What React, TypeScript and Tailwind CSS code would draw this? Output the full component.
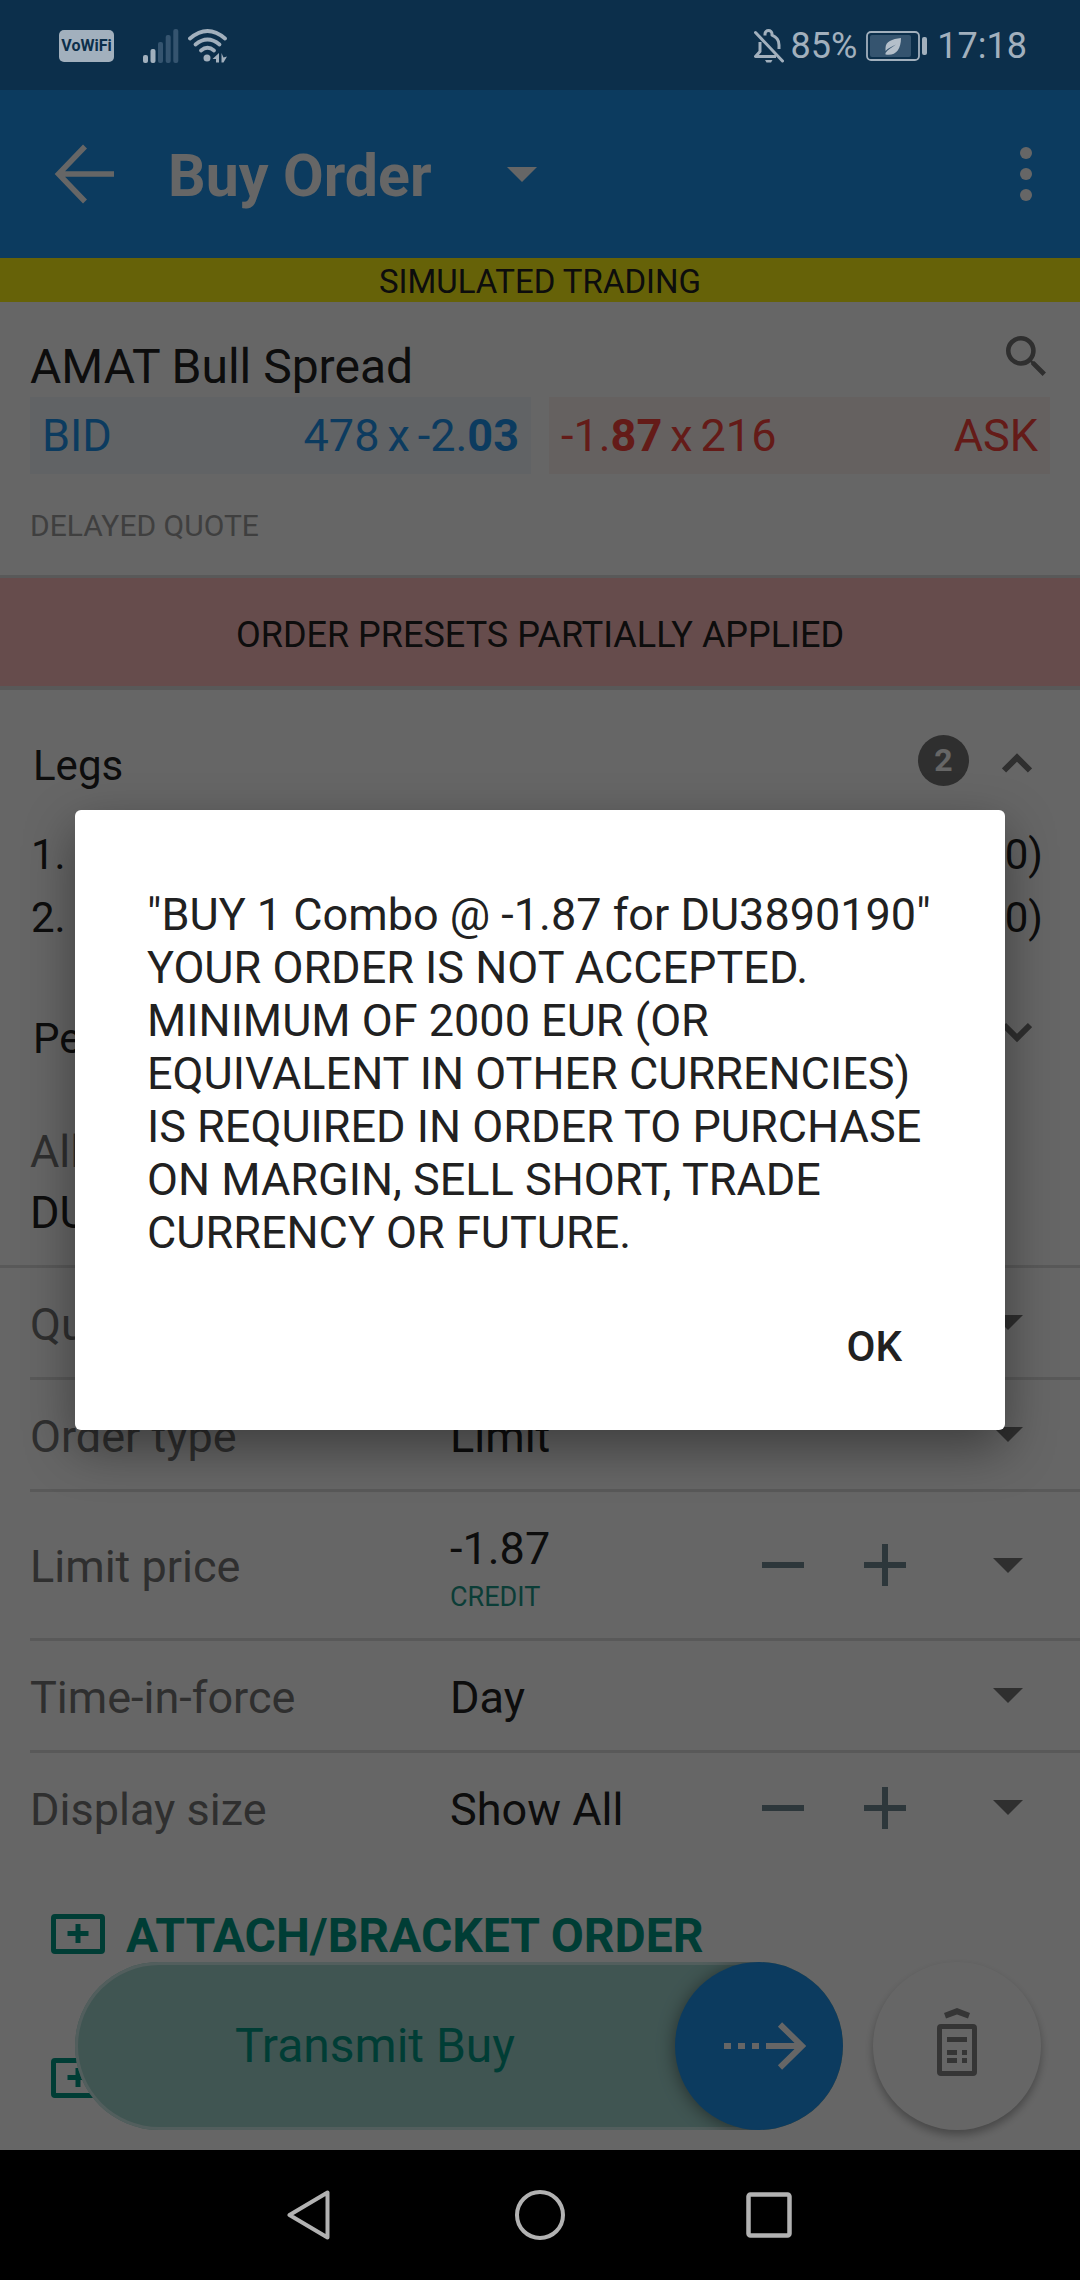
import type { ReactNode } from "react";

const orderTypes = ["Limit", "Market", "Stop"];
const timesInForce = ["Day", "GTC", "OPG"];

function StatusBar() {
  return (
    <div className="flex h-[90px] items-center justify-between bg-[#0c2f4b] pl-[59px] pr-[53px] pt-px text-[36px] leading-[42px] text-[#a2b0bd]">
      <div className="flex items-center">
        <span className="flex h-[32px] w-[55px] items-center justify-center rounded-[5px] bg-[#a2b0bd] text-[16px] font-bold leading-[20px] text-[#0c2f4b]">
          VoWiFi
        </span>
        <svg className="ml-[29px]" width="36" height="34" viewBox="0 0 36 34" aria-hidden="true">
          <g fill="#a2b0bd">
            <rect x="0" y="26" width="5" height="8" rx="2" />
            <rect x="7.5" y="20" width="5" height="14" rx="2" />
          </g>
          <g fill="#35546f">
            <rect x="15" y="13" width="5" height="21" rx="2" />
            <rect x="22.7" y="6" width="5" height="28" rx="2" />
            <rect x="30.3" y="0" width="5" height="34" rx="2" />
          </g>
        </svg>
        <svg className="ml-[9px]" width="40" height="34" viewBox="0 0 40 34" aria-hidden="true">
          <g fill="none" stroke="#a2b0bd" strokeWidth="3.8" strokeLinecap="round">
            <path d="M2 9.5Q19.500 -5.500 37 9.500" />
            <path d="M7.500 15.500Q19.500 5.500 31.500 15.500" />
            <path d="M13 21.500Q19.500 16 26 21.500" />
          </g>
          <circle cx="19" cy="29" r="3.500" fill="#a2b0bd" />
          <path d="M24.500 30 31 24v9.500h-3V30zM33.500 24l2 4.500 3.500-1-3.500 6h-2z" fill="#a2b0bd" />
        </svg>
      </div>
      <div className="flex items-center">
        <svg width="30" height="34" viewBox="0 0 30 34" aria-hidden="true" fill="none" stroke="#a2b0bd" strokeWidth="3">
          <path d="M1.500 3.500 28.500 32" strokeLinecap="round" />
          <path d="M6 13v9.500L1.500 27.500H22M11 6.500V5a3.500 3.500 0 0 1 7 0v1.200C22.500 8 25 11.500 25 16v4" strokeLinejoin="round" />
          <path d="M11 31h7.500l-1.500 2.500h-4.500z" fill="#a2b0bd" stroke="none" />
        </svg>
        <span className="ml-[7px]">85%</span>
        <svg className="ml-[9px]" width="62" height="30" viewBox="0 0 62 30" aria-hidden="true">
          <rect x="1" y="1" width="52" height="28" rx="4" fill="none" stroke="#a2b0bd" strokeWidth="1.800" />
          <rect x="4" y="4" width="41" height="22" rx="2" fill="#35546f" />
          <rect x="56" y="6" width="5" height="18" rx="2" fill="#a2b0bd" />
          <path d="M35 7C26 8 19.500 10.500 19.500 17v3C22 17 26 15.500 30 13.500 25.500 17 21.500 18.500 19.500 22v1.500C29 25.500 35 19 35 7z" fill="#b4bfca" />
        </svg>
        <time className="ml-[9px]">17:18</time>
      </div>
    </div>
  );
}

function Caret({ className }: { className: string }) {
  return (
    <svg className={className} width="30" height="15" viewBox="0 0 30 15" fill="currentColor" aria-hidden="true">
      <path d="M0 0h30L15 15z" />
    </svg>
  );
}

function AppHeader() {
  return (
    <header className="flex h-[168px] items-center bg-[#1e94ee] pl-[54px] pr-[48px] text-white">
      <button type="button" aria-label="Back">
        <svg width="60" height="60" viewBox="0 0 60 60" fill="none" stroke="currentColor" strokeWidth="5.500" aria-hidden="true">
          <path d="M60 30H5M31 2.500 4.500 30 31 57.500" />
        </svg>
      </button>
      <button type="button" className="ml-[54px] flex items-center gap-[76px]">
        <h1 className="pt-[4px] text-[59px] font-bold leading-[70px]">Buy Order</h1>
        <Caret className="text-white" />
      </button>
      <button type="button" aria-label="More options" className="ml-auto">
        <svg width="12" height="54" viewBox="0 0 12 54" fill="currentColor" aria-hidden="true">
          <circle cx="6" cy="6" r="6" />
          <circle cx="6" cy="27" r="6" />
          <circle cx="6" cy="48" r="6" />
        </svg>
      </button>
    </header>
  );
}

function Quote() {
  return (
    <section className="px-[30px] pb-[31px] pt-[34px]">
      <div className="flex items-start justify-between">
        <h2 className="text-[48px] leading-[61px]">AMAT Bull Spread</h2>
        <button type="button" aria-label="Search" className="mr-[4px]">
          <svg width="40" height="40" viewBox="3 3 17.500 17.500" fill="#757575" aria-hidden="true">
            <path d="M15.500 14h-.79l-.28-.27A6.471 6.471 0 0 0 16 9.500 6.500 6.500 0 1 0 9.500 16c1.610 0 3.090-.59 4.230-1.570l.27.28v.79l5 4.990L20.490 19l-4.990-5zm-6 0C7.010 14 5 11.990 5 9.500S7.010 5 9.500 5 14 7.010 14 9.500 11.990 14 9.500 14z" />
          </svg>
        </button>
      </div>
      <div className="grid grid-cols-2 gap-[18px] text-[45px] leading-[77px]">
        <div className="flex justify-between bg-[#f2f7fc] px-[12px] text-[#1e94ee]">
          <span>BID</span>
          <span className="flex gap-[8px]">
            <span>478</span>
            <span>x</span>
            <span>
              -2.<b>03</b>
            </span>
          </span>
        </div>
        <div className="flex justify-between bg-[#fdf3f1] px-[12px] text-[#fa453c]">
          <span className="flex gap-[8px]">
            <span>
              -1.<b>87</b>
            </span>
            <span>x</span>
            <span>216</span>
          </span>
          <span>ASK</span>
        </div>
      </div>
      <p className="mt-[34px] text-[30px] leading-[36px] text-[#9e9e9e]">DELAYED QUOTE</p>
    </section>
  );
}

function Chevron({ open }: { open: boolean }) {
  return (
    <svg width="30" height="34" viewBox="0 0 30 34" fill="none" stroke="#757575" strokeWidth="6" aria-hidden="true">
      <path d={open ? "M2 22.500 15 9.500 28 22.500" : "M2 4 15 17 28 4"} />
    </svg>
  );
}

function Legs() {
  return (
    <section className="pl-[31px] pt-[33px] text-[42px]">
      <button type="button" className="flex h-[84px] w-full items-center pl-[2px] pr-[48px]">
        <span>Legs</span>
        <span className="mb-[10px] ml-auto flex h-[51px] w-[51px] items-center justify-center rounded-full bg-[#757575] text-[32px] font-bold leading-[51px] text-white">
          2
        </span>
        <span className="ml-[33px]">
          <Chevron open />
        </span>
      </button>
      <ol className="pr-[37px] pt-[16px] leading-[63px]">
        <li className="flex justify-between">
          <span>1.</span>
          <span>(0)</span>
        </li>
        <li className="flex justify-between">
          <span>2.</span>
          <span>(0)</span>
        </li>
      </ol>
      <button type="button" className="mt-[47px] flex h-[84px] w-full items-center justify-between pl-[2px] pr-[48px]">
        <span>Perf</span>
        <Chevron open={false} />
      </button>
    </section>
  );
}

function Row({ children, tall, last }: { children: ReactNode; tall?: boolean; last?: boolean }) {
  const height = tall ? "h-[149px]" : last ? "h-[109px]" : "h-[112px]";
  const border = last ? "" : "border-b-[3px] border-[#dedede]";
  return <div className={`ml-[30px] flex items-center pr-[57px] ${height} ${border}`}>{children}</div>;
}

function Label({ id, children }: { id: string; children: ReactNode }) {
  return (
    <label htmlFor={id} className="w-[420px] shrink-0 pt-[3px] text-[#757575]">
      {children}
    </label>
  );
}

function SelectRow({ id, label, options }: { id: string; label: string; options: string[] }) {
  return (
    <Row>
      <Label id={id}>{label}</Label>
      <select id={id} className="min-w-0 flex-1 appearance-none bg-transparent pt-[3px]">
        {options.map((option) => (
          <option key={option}>{option}</option>
        ))}
      </select>
      <Caret className="shrink-0 text-[#757575]" />
    </Row>
  );
}

function Stepper({ name }: { name: string }) {
  return (
    <div className="flex shrink-0 items-center text-[#708a94]">
      <button type="button" aria-label={`Decrease ${name}`}>
        <svg width="42" height="42" viewBox="0 0 42 42" fill="currentColor" aria-hidden="true">
          <path d="M0 18h42v6H0z" />
        </svg>
      </button>
      <button type="button" aria-label={`Increase ${name}`} className="ml-[60px]">
        <svg width="42" height="42" viewBox="0 0 42 42" fill="currentColor" aria-hidden="true">
          <path d="M0 18h18V0h6v18h18v6H24v18h-6V24H0z" />
        </svg>
      </button>
      <button type="button" aria-label={`Choose ${name}`} className="ml-[87px]">
        <Caret className="text-[#757575]" />
      </button>
    </div>
  );
}

function OrderForm() {
  return (
    <form className="text-[45px] leading-[53px]">
      <div className="border-b-[3px] border-[#dedede] px-[30px] pb-[22px] pt-[41px] leading-[61px]">
        <p className="text-[#757575]">All</p>
        <p>DU3</p>
      </div>
      <SelectRow id="quantity" label="Quantity" options={["1", "2", "5"]} />
      <SelectRow id="order-type" label="Order type" options={orderTypes} />
      <Row tall>
        <Label id="limit-price">Limit price</Label>
        <div className="min-w-0 flex-1 pt-[4px]">
          <input id="limit-price" defaultValue="-1.87" className="block h-[53px] w-full bg-transparent" />
          <p className="mt-[6px] text-[27px] leading-[32px] text-[#1c9a89]">CREDIT</p>
        </div>
        <Stepper name="limit price" />
      </Row>
      <SelectRow id="time-in-force" label="Time-in-force" options={timesInForce} />
      <Row last>
        <Label id="display-size">Display size</Label>
        <input id="display-size" defaultValue="Show All" className="min-w-0 flex-1 bg-transparent pt-[3px]" />
        <Stepper name="display size" />
      </Row>
    </form>
  );
}

function AddOrderIcon() {
  return (
    <svg width="54" height="40" viewBox="0 0 54 40" fill="none" stroke="currentColor" strokeWidth="5" aria-hidden="true">
      <rect x="2.500" y="2.500" width="49" height="35" rx="1.500" />
      <path d="M16.500 19.500h21M27 10v19" />
    </svg>
  );
}

function AttachedOrders() {
  return (
    <section className="pl-[51px] text-[48px] font-bold leading-[56px] text-[#009885]">
      <button type="button" className="flex h-[144px] items-center gap-[21px]">
        <AddOrderIcon />
        <span className="pt-[3px]">ATTACH/BRACKET ORDER</span>
      </button>
      <button type="button" aria-label="Attach another order" className="flex h-[144px] items-center">
        <AddOrderIcon />
      </button>
    </section>
  );
}

function ActionBar() {
  return (
    <div className="absolute inset-x-0 bottom-[20px] flex gap-[30px] pl-[75px] pr-[39px]">
      <button
        type="button"
        className="flex h-[168px] flex-1 items-center overflow-hidden rounded-full bg-[#a0d4cd] text-[48px] leading-[56px] text-[#009885] shadow-[inset_0_0_0_3px_#cdebe8]"
      >
        <span className="flex-1">Transmit Buy</span>
        <span className="flex h-[168px] w-[168px] items-center justify-center rounded-full bg-[#1e94ee] pl-[11px] text-white shadow-[0_2px_18px_rgba(0,0,0,0.45)]">
          <svg width="82" height="48" viewBox="0 0 82 48" fill="none" stroke="currentColor" strokeWidth="6" aria-hidden="true">
            <path d="M0 24h7M14 24h7M28 24h7M42 24h36M56 2.500 78 24 56 45.500" />
          </svg>
        </span>
      </button>
      <button
        type="button"
        aria-label="Order calculator"
        className="flex h-[168px] w-[168px] items-center justify-center rounded-full bg-white text-[#858585] shadow-[0_5px_9px_rgba(0,0,0,0.3)]"
      >
        <svg className="mb-[8px]" width="40" height="68" viewBox="0 0 40 68" fill="currentColor" aria-hidden="true">
          <path d="M7 5 20 0l13 5-2 5.500-11-4-11 4z" />
          <path d="M4 16h32a4 4 0 0 1 4 4v44a4 4 0 0 1-4 4H4a4 4 0 0 1-4-4V20a4 4 0 0 1 4-4zm1 5v42h30V21z" fillRule="evenodd" />
          <path d="M10 29h20v5H10zM10 42h10v5H10zM25 42h5v5h-5zM10 50h10v5H10zM25 50h5v5h-5z" />
        </svg>
      </button>
    </div>
  );
}

function ErrorDialog() {
  return (
    <div className="absolute inset-0 flex items-center justify-center bg-black/60 px-[75px]">
      <div
        role="alertdialog"
        aria-modal="true"
        aria-describedby="dialog-message"
        className="flex w-full flex-col rounded-[6px] bg-white px-[72px] pb-[46px] pt-[78px] shadow-[0_18px_50px_rgba(0,0,0,0.4)]"
      >
        <p id="dialog-message" className="text-[45px] leading-[53px]">
          "BUY 1 Combo @ -1.87 for DU3890190"
          <br />
          YOUR ORDER IS NOT ACCEPTED. MINIMUM OF 2000 EUR (OR EQUIVALENT IN OTHER CURRENCIES) IS REQUIRED IN ORDER TO
          PURCHASE ON MARGIN, SELL SHORT, TRADE CURRENCY OR FUTURE.
        </p>
        <button type="button" className="mt-[51px] self-end px-[31px] text-[42px] font-medium leading-[74px]">
          OK
        </button>
      </div>
    </div>
  );
}

function NavigationBar() {
  return (
    <nav className="grid h-[130px] grid-cols-[1fr_auto_1fr] items-center bg-black text-[#b2b2b2]">
      <button type="button" aria-label="Back" className="mr-[185px] justify-self-end">
        <svg width="43" height="50" viewBox="0 0 43 50" fill="none" stroke="currentColor" strokeWidth="4" strokeLinejoin="round" aria-hidden="true">
          <path d="M40.500 2.500v45L2.500 25z" />
        </svg>
      </button>
      <button type="button" aria-label="Home">
        <svg width="50" height="50" viewBox="0 0 50 50" fill="none" stroke="currentColor" strokeWidth="4" aria-hidden="true">
          <circle cx="25" cy="25" r="23" />
        </svg>
      </button>
      <button type="button" aria-label="Recent apps" className="ml-[181px] justify-self-start">
        <svg width="46" height="46" viewBox="0 0 46 46" fill="none" stroke="currentColor" strokeWidth="4.500" aria-hidden="true">
          <rect x="2.500" y="2.500" width="41" height="41" rx="2" />
        </svg>
      </button>
    </nav>
  );
}

export default function App() {
  return (
    <div className="flex min-h-screen flex-col bg-black font-['Roboto',sans-serif] text-[#212121]">
      <StatusBar />
      <main className="relative flex-1 overflow-hidden bg-white">
        <AppHeader />
        <p className="bg-[#fff514] pt-[3px] text-center text-[33px] leading-[41px]">SIMULATED TRADING</p>
        <Quote />
        <p className="border-b-[4px] border-t-[3px] border-[#dedede] bg-[#ffbebe] pt-[6px] text-center text-[36px] leading-[102px]">
          ORDER PRESETS PARTIALLY APPLIED
        </p>
        <Legs />
        <OrderForm />
        <AttachedOrders />
        <ActionBar />
        <ErrorDialog />
      </main>
      <NavigationBar />
    </div>
  );
}
